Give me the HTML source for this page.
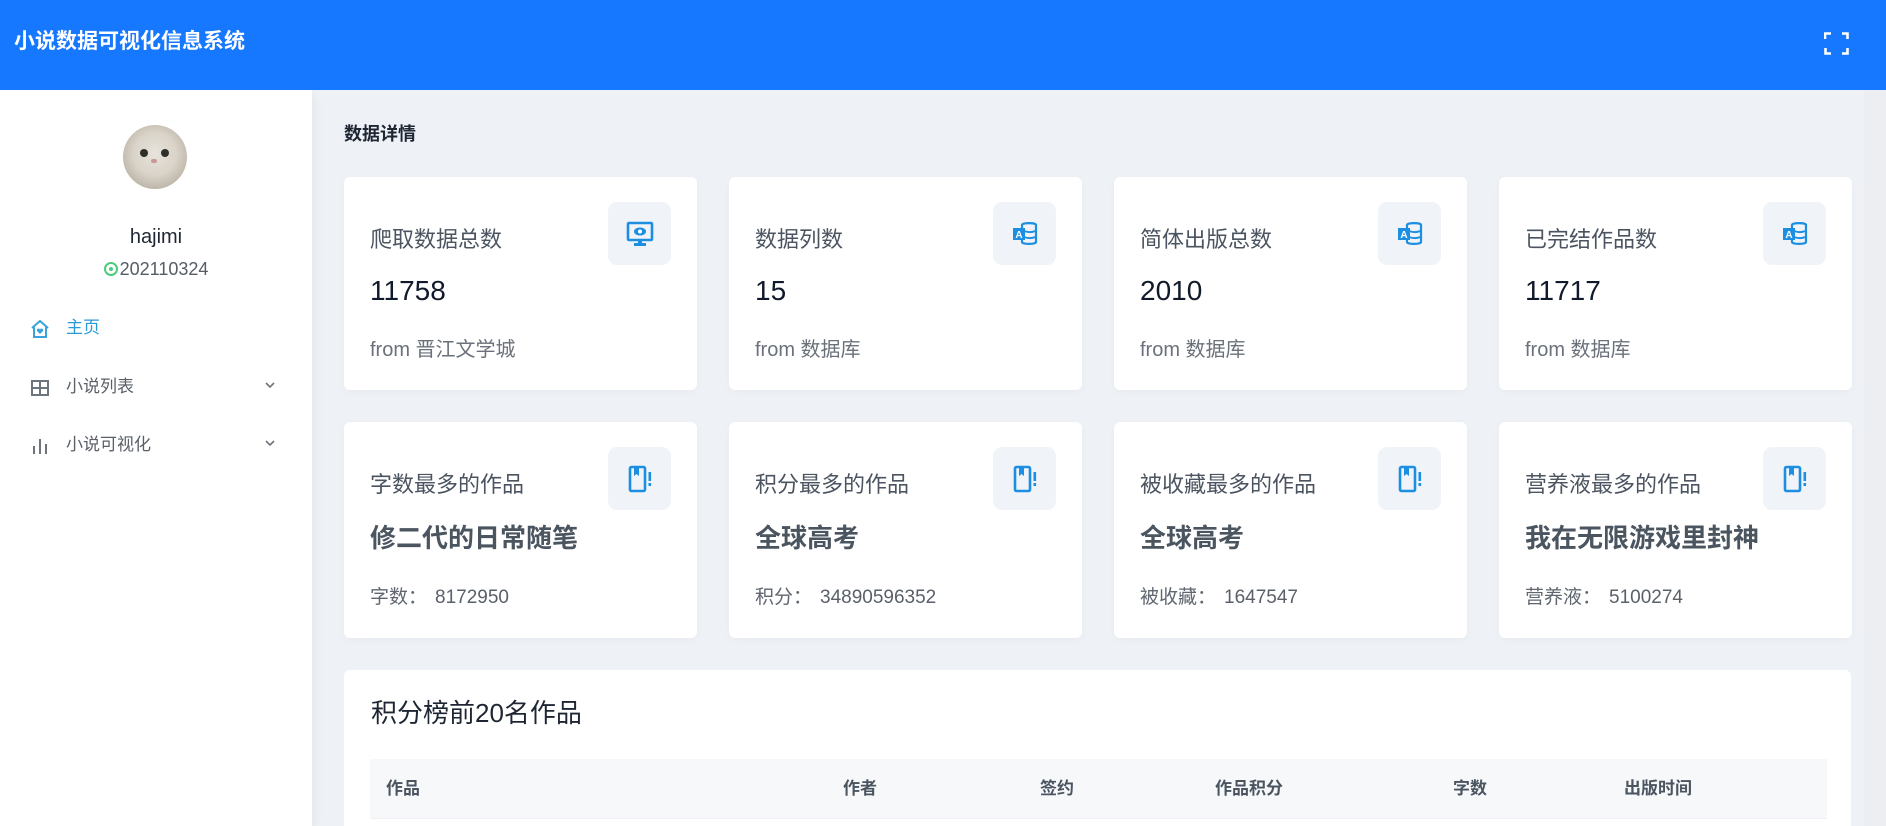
<!DOCTYPE html>
<html><head><meta charset="utf-8">
<style>
*{margin:0;padding:0;box-sizing:border-box}
html,body{width:1886px;height:826px;overflow:hidden}
body{background:#eef1f5;font-family:"Liberation Sans","Noto Sans CJK SC",sans-serif;position:relative}
.hdr{position:absolute;left:0;top:0;width:1886px;height:90px;background:#1677ff;z-index:2}
.hdr .t{position:absolute;left:14px;top:29px;font-size:21px;font-weight:bold;color:#fff;line-height:26px}
.fs{position:absolute;left:1824px;top:32px;width:25px;height:23px}
.side{position:absolute;left:0;top:90px;width:312px;height:736px;background:#fff;box-shadow:2px 4px 10px rgba(0,0,0,.05)}
.av{position:absolute;left:123px;top:125px;width:64px;height:64px;border-radius:50%;background:radial-gradient(circle at 50% 45%,#e8e4dc 0,#d9d3c8 45%,#bdb5a8 75%,#8e8678 100%);overflow:hidden}
.av i{position:absolute;width:8px;height:8px;border-radius:50%;background:#2f2f2a;top:24px}
.name{position:absolute;left:0;width:312px;top:226px;text-align:center;font-size:20px;color:#1f2633}
.id{position:absolute;left:0;width:312px;top:259px;text-align:center;font-size:18px;color:#555c66}
.id span{display:inline-block;width:14px;height:14px;border:2px solid #4ccb7a;border-radius:50%;position:relative;top:1px;margin-right:2px}
.id span:after{content:"";position:absolute;left:3px;top:3px;width:4px;height:4px;border-radius:50%;background:#4ccb7a}
.mi{position:absolute;left:0;width:312px;height:30px;font-size:17px;color:#5a6068;line-height:30px}
.mi .ic{position:absolute;left:30px;top:6px}
.mi .tx{position:absolute;left:66px}
.mi .ch{position:absolute;left:263px;top:6px}
.ttl{position:absolute;left:344px;top:120px;font-size:18px;font-weight:bold;color:#1f2633}
.card{position:absolute;width:353px;background:#fff;border-radius:6px;box-shadow:0 2px 8px rgba(0,0,0,.03)}
.r1{top:177px;height:213px}
.r2{top:422px;height:216px}
.card .lb{position:absolute;left:26px;top:49px;font-size:22px;color:#4b5460;line-height:28px}
.card .v{position:absolute;left:26px;top:97px;font-size:28px;color:#111a2b;line-height:34px}
.card .f{position:absolute;left:26px;top:160px;font-size:20px;color:#6a717a;line-height:26px}
.card .bt{position:absolute;left:26px;top:100px;font-size:26px;font-weight:bold;color:#4a5560;line-height:32px}
.card .dt{position:absolute;left:26px;top:163px;font-size:19px;color:#5f666f;line-height:26px}
.card .dt b{font-weight:normal;margin-left:8px;color:#5a6069}
.ib{position:absolute;right:26px;top:25px;width:63px;height:63px;border-radius:9px;background:#f0f3f8}
.ib svg{position:absolute;left:18px;top:18px}
.tbl{position:absolute;left:344px;top:670px;width:1507px;height:156px;background:#fff;border-radius:6px 6px 0 0}
.tbl .h{position:absolute;left:27px;top:26px;font-size:26px;color:#1f2633;line-height:34px}
.th{position:absolute;left:26px;top:89px;width:1457px;height:60px;background:#f7f8fa;border-bottom:1px solid #eef0f3}
.th span{position:absolute;top:19px;font-size:17px;font-weight:bold;color:#4a5560;line-height:22px}
.sb{position:absolute;left:1864px;top:90px;width:22px;height:736px;background:#eceef1}
</style></head><body>
<div class="hdr"><div class="t">小说数据可视化信息系统</div>
<svg class="fs" viewBox="0 0 25 23" fill="none" stroke="#fff" stroke-width="2.6"><path d="M1 7V1.5H7M18 1.5H23.5V7M23.5 16V21.5H18M7 21.5H1.5V16"/></svg></div>
<div class="side"></div>
<div class="av"><i style="left:17px"></i><i style="left:38px"></i><span style="position:absolute;left:28px;top:34px;width:6px;height:4px;border-radius:3px;background:#c99a94"></span></div>
<div class="name">hajimi</div>
<div class="id"><span></span>202110324</div>
<div class="mi" style="top:313px;color:#2a9ad6"><svg class="ic" width="20" height="20" viewBox="0 0 20 20" fill="none" stroke="#3aa3dc" stroke-width="2"><path d="M2 9L10 2L18 9M4 8V18H16V8"/><path d="M10 15l-3-3a1.6 1.6 0 0 1 3-1.5a1.6 1.6 0 0 1 3 1.5z" fill="#3aa3dc" stroke="none"/></svg><span class="tx">主页</span></div>
<div class="mi" style="top:372px"><svg class="ic" width="20" height="20" viewBox="0 0 20 20" fill="none" stroke="#6e747b" stroke-width="2"><rect x="2" y="3" width="16" height="14"/><path d="M2 10H18M10 3V17"/></svg><span class="tx">小说列表</span><svg class="ch" width="14" height="14" viewBox="0 0 14 14" fill="none" stroke="#6e747b" stroke-width="1.6"><path d="M3 5L7 9L11 5"/></svg></div>
<div class="mi" style="top:430px"><svg class="ic" width="20" height="20" viewBox="0 0 20 20" fill="#6e747b"><rect x="3" y="10" width="2" height="8"/><rect x="9" y="3" width="2" height="15"/><rect x="15" y="8" width="2" height="10"/></svg><span class="tx">小说可视化</span><svg class="ch" width="14" height="14" viewBox="0 0 14 14" fill="none" stroke="#6e747b" stroke-width="1.6"><path d="M3 5L7 9L11 5"/></svg></div>

<div class="ttl">数据详情</div>

<div class="card r1" style="left:344px"><div class="lb">爬取数据总数</div><div class="v">11758</div><div class="f">from 晋江文学城</div>
<div class="ib"><svg width="28" height="28" viewBox="0 0 28 28"><rect x="2" y="3" width="24" height="17" rx="1" fill="none" stroke="#1c8fe3" stroke-width="2.6"/><ellipse cx="14" cy="11.5" rx="6" ry="4" fill="#1c8fe3"/><circle cx="14" cy="11.5" r="2" fill="#fff"/><rect x="12" y="20" width="4" height="4" fill="#1c8fe3"/><rect x="8" y="23" width="12" height="3" fill="#1c8fe3"/></svg></div></div>

<div class="card r1" style="left:729px"><div class="lb">数据列数</div><div class="v">15</div><div class="f">from 数据库</div>
<div class="ib"><svg width="28" height="28" viewBox="0 0 28 28"><path d="M11 5C11 2.5 25 2.5 25 5V22C25 24.5 11 24.5 11 22Z" fill="none" stroke="#1c8fe3" stroke-width="2.2"/><path d="M13 11C17 12.5 21 12.5 24 11M13 17C17 18.5 21 18.5 24 17" stroke="#1c8fe3" stroke-width="2" fill="none"/><rect x="2" y="8" width="12" height="12" fill="#1c8fe3"/><text x="8" y="18" font-size="10" font-weight="bold" fill="#fff" text-anchor="middle" font-family="Liberation Sans">A</text></svg></div></div>

<div class="card r1" style="left:1114px"><div class="lb">简体出版总数</div><div class="v">2010</div><div class="f">from 数据库</div>
<div class="ib"><svg width="28" height="28" viewBox="0 0 28 28"><path d="M11 5C11 2.5 25 2.5 25 5V22C25 24.5 11 24.5 11 22Z" fill="none" stroke="#1c8fe3" stroke-width="2.2"/><path d="M13 11C17 12.5 21 12.5 24 11M13 17C17 18.5 21 18.5 24 17" stroke="#1c8fe3" stroke-width="2" fill="none"/><rect x="2" y="8" width="12" height="12" fill="#1c8fe3"/><text x="8" y="18" font-size="10" font-weight="bold" fill="#fff" text-anchor="middle" font-family="Liberation Sans">A</text></svg></div></div>

<div class="card r1" style="left:1499px"><div class="lb">已完结作品数</div><div class="v">11717</div><div class="f">from 数据库</div>
<div class="ib"><svg width="28" height="28" viewBox="0 0 28 28"><path d="M11 5C11 2.5 25 2.5 25 5V22C25 24.5 11 24.5 11 22Z" fill="none" stroke="#1c8fe3" stroke-width="2.2"/><path d="M13 11C17 12.5 21 12.5 24 11M13 17C17 18.5 21 18.5 24 17" stroke="#1c8fe3" stroke-width="2" fill="none"/><rect x="2" y="8" width="12" height="12" fill="#1c8fe3"/><text x="8" y="18" font-size="10" font-weight="bold" fill="#fff" text-anchor="middle" font-family="Liberation Sans">A</text></svg></div></div>

<div class="card r2" style="left:344px"><div class="lb">字数最多的作品</div><div class="bt">修二代的日常随笔</div><div class="dt">字数：<b>8172950</b></div>
<div class="ib"><svg width="28" height="28" viewBox="0 0 28 28"><rect x="4" y="2" width="15" height="24" rx="1.5" fill="none" stroke="#1c8fe3" stroke-width="2.6"/><path d="M8 3V11L10.5 9L13 11V3" fill="#1c8fe3"/><rect x="22.5" y="7" width="2.6" height="9" fill="#1c8fe3"/><rect x="22.5" y="18" width="2.6" height="3" fill="#1c8fe3"/></svg></div></div>

<div class="card r2" style="left:729px"><div class="lb">积分最多的作品</div><div class="bt">全球高考</div><div class="dt">积分：<b>34890596352</b></div>
<div class="ib"><svg width="28" height="28" viewBox="0 0 28 28"><rect x="4" y="2" width="15" height="24" rx="1.5" fill="none" stroke="#1c8fe3" stroke-width="2.6"/><path d="M8 3V11L10.5 9L13 11V3" fill="#1c8fe3"/><rect x="22.5" y="7" width="2.6" height="9" fill="#1c8fe3"/><rect x="22.5" y="18" width="2.6" height="3" fill="#1c8fe3"/></svg></div></div>

<div class="card r2" style="left:1114px"><div class="lb">被收藏最多的作品</div><div class="bt">全球高考</div><div class="dt">被收藏：<b>1647547</b></div>
<div class="ib"><svg width="28" height="28" viewBox="0 0 28 28"><rect x="4" y="2" width="15" height="24" rx="1.5" fill="none" stroke="#1c8fe3" stroke-width="2.6"/><path d="M8 3V11L10.5 9L13 11V3" fill="#1c8fe3"/><rect x="22.5" y="7" width="2.6" height="9" fill="#1c8fe3"/><rect x="22.5" y="18" width="2.6" height="3" fill="#1c8fe3"/></svg></div></div>

<div class="card r2" style="left:1499px"><div class="lb">营养液最多的作品</div><div class="bt">我在无限游戏里封神</div><div class="dt">营养液：<b>5100274</b></div>
<div class="ib"><svg width="28" height="28" viewBox="0 0 28 28"><rect x="4" y="2" width="15" height="24" rx="1.5" fill="none" stroke="#1c8fe3" stroke-width="2.6"/><path d="M8 3V11L10.5 9L13 11V3" fill="#1c8fe3"/><rect x="22.5" y="7" width="2.6" height="9" fill="#1c8fe3"/><rect x="22.5" y="18" width="2.6" height="3" fill="#1c8fe3"/></svg></div></div>

<div class="tbl"><div class="h">积分榜前20名作品</div>
<div class="th"><span style="left:16px">作品</span><span style="left:473px">作者</span><span style="left:670px">签约</span><span style="left:845px">作品积分</span><span style="left:1083px">字数</span><span style="left:1254px">出版时间</span></div></div>
<div class="sb"></div>
</body></html>
